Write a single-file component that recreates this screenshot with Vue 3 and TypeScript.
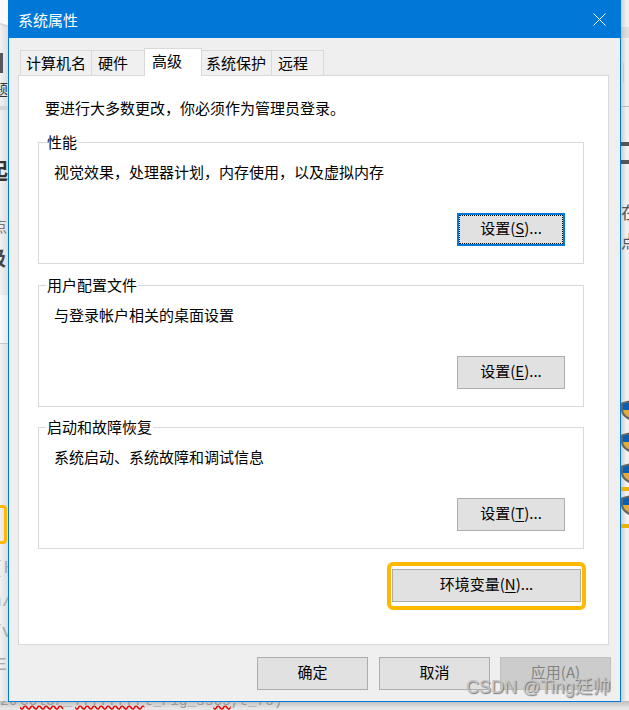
<script setup lang="ts">
const tabs = [
  { name: "计算机名", width: 72, pad: 5, active: false },
  { name: "硬件", width: 54, pad: 6, active: false },
  { name: "高级", width: 58, pad: 7, active: true },
  { name: "系统保护", width: 71, pad: 4, active: false },
  { name: "远程", width: 53, pad: 6, active: false },
];

const groups = [
  { title: "性能", text: "视觉效果，处理器计划，内存使用，以及虚拟内存", key: "S", focused: true },
  { title: "用户配置文件", text: "与登录帐户相关的桌面设置", key: "E", focused: false },
  { title: "启动和故障恢复", text: "系统启动、系统故障和调试信息", key: "T", focused: false },
];

const shields = [400, 432, 463, 495];
</script>

<template>
  <div class="desktop">
    <!-- обрывки окна позади диалога -->
    <div class="back-left">
      <div class="bl-top"></div>
      <div class="bl-block"></div>
      <div class="bl-band"></div>
      <div class="bl-white"></div>
      <span class="bl-char bl-1">题</span>
      <span class="bl-char bl-2">起</span>
      <span class="bl-char bl-3">点</span>
      <span class="bl-char bl-4">级</span>
      <div class="bl-badge"></div>
      <span class="bl-code bl-c1">(H</span>
      <span class="bl-code bl-c2">n/</span>
      <span class="bl-code bl-c3">/v</span>
      <span class="bl-code bl-c4">E</span>
    </div>
    <div class="back-right">
      <div class="br-band"></div>
      <div class="br-tick"></div>
      <div class="br-rule"></div>
      <div class="br-line br-l1"></div>
      <div class="br-line br-l2"></div>
      <span class="br-char br-1">在</span>
      <span class="br-char br-2">点</span>
      <svg
        v-for="top in shields"
        :key="top"
        class="shield"
        :style="{ top: top + 'px' }"
        width="10"
        height="21"
        viewBox="0 0 10 21"
      >
        <path d="M10 0 L2 2 L0 3 V11 Q1 17 10 21 Z" fill="#666" />
        <path d="M10 2 L2 4 V10 H10 Z" fill="#0a5fb4" />
        <path d="M10 10 H2 Q3 16 10 18 Z" fill="#e5ab3a" />
      </svg>
      <div class="br-bar br-b1"></div>
      <div class="br-bar br-b2"></div>
    </div>
    <div class="back-bottom">
      <span class="bb-lead">20</span>
      <span class="wavy">color</span>
      <span class="bb-gap">_</span>
      <span class="wavy">FFFFFFFF</span>
      <span class="plain">t_Fig_ss</span>
      <span class="wavy">cs</span>
      <span class="plain">,t_70)</span>
    </div>

    <div class="dialog">
      <header class="titlebar">
        <span>系统属性</span>
        <svg class="close" width="13" height="13" viewBox="0 0 13 13">
          <path d="M0.5 0.5 L12.5 12.5 M12.5 0.5 L0.5 12.5" stroke="#fff" stroke-width="1" fill="none" />
        </svg>
      </header>

      <div class="body">
        <nav class="tabs">
          <div
            v-for="tab in tabs"
            :key="tab.name"
            class="tab"
            :class="{ active: tab.active }"
            :style="{ width: tab.width + 'px', paddingLeft: tab.pad + 'px' }"
          >
            {{ tab.name }}
          </div>
        </nav>

        <section class="panel">
          <p class="notice">要进行大多数更改，你必须作为管理员登录。</p>

          <div v-for="group in groups" :key="group.title" class="group">
            <div class="legend">{{ group.title }}</div>
            <p class="desc">{{ group.text }}</p>
            <div class="group-actions">
              <button class="btn settings" :class="{ focused: group.focused }">
                <span class="btn-inner">设置(<u>{{ group.key }}</u>)...</span>
              </button>
            </div>
          </div>

          <div class="env-row">
            <div class="highlight">
              <button class="btn env"><span class="btn-inner">环境变量(<u>N</u>)...</span></button>
            </div>
          </div>
        </section>

        <footer class="footer">
          <button class="btn action"><span class="btn-inner">确定</span></button>
          <button class="btn action"><span class="btn-inner">取消</span></button>
          <button class="btn action disabled"><span class="btn-inner">应用(A)</span></button>
        </footer>
      </div>
    </div>

    <div class="watermark">CSDN @Ting廷帅</div>
  </div>
</template>

<style>
html,
body {
  margin: 0;
  background: #fff;
}
</style>

<style scoped>
.desktop {
  position: relative;
  width: 629px;
  height: 710px;
  overflow: hidden;
  background: #f4f4f4;
  font-family: "Noto Sans CJK SC", "Liberation Sans", sans-serif;
  color: #000;
}

/* фон слева */
.back-left {
  position: absolute;
  left: 0;
  top: 0;
  width: 9px;
  height: 710px;
  overflow: hidden;
  background: linear-gradient(to right, #f1f1f1, #dadada);
}
.bl-top {
  position: absolute;
  left: -6px;
  top: -12px;
  width: 15px;
  height: 37px;
  border-bottom: 2px solid #d5d5d5;
  border-radius: 0 0 0 14px;
  background: #fafafa;
}
.bl-block {
  position: absolute;
  left: 0;
  top: 53px;
  width: 3px;
  height: 20px;
  background: #55555f;
}
.bl-band {
  position: absolute;
  left: 0;
  top: 106px;
  width: 9px;
  height: 4px;
  background: #d6d6d6;
}
.bl-white {
  position: absolute;
  left: 0;
  top: 295px;
  width: 9px;
  height: 48px;
  border-bottom: 1px solid #c8c8c8;
  background: linear-gradient(to right, #fbfbfb, #e6e6e6);
}
.bl-char,
.bl-code,
.br-char {
  position: absolute;
  line-height: 1;
  white-space: nowrap;
}
.bl-1 {
  left: -7px;
  top: 81px;
  font-size: 15px;
  color: #333;
}
.bl-2 {
  left: -14px;
  top: 158px;
  font-size: 22px;
  font-weight: 700;
  color: #333;
}
.bl-3 {
  left: -8px;
  top: 218px;
  font-size: 15px;
  color: #777;
}
.bl-4 {
  left: -14px;
  top: 248px;
  font-size: 20px;
  font-weight: 700;
  color: #444;
}
.bl-badge {
  position: absolute;
  left: -8px;
  top: 505px;
  width: 9px;
  height: 33px;
  border: 3px solid #ffb900;
  border-radius: 4px;
}
.bl-code {
  font-family: "Liberation Mono", monospace;
  font-size: 18px;
  color: #aaa;
}
.bl-c1 {
  left: -7px;
  top: 559px;
}
.bl-c2 {
  left: -9px;
  top: 592px;
}
.bl-c3 {
  left: -9px;
  top: 623px;
}
.bl-c4 {
  left: -4px;
  top: 656px;
}

/* фон справа */
.back-right {
  position: absolute;
  left: 620px;
  top: 0;
  width: 9px;
  height: 710px;
  overflow: hidden;
  background: linear-gradient(to right, #c8c8c8, #f1f1f1 70%);
}
.br-band {
  position: absolute;
  left: 0;
  top: 27px;
  width: 9px;
  height: 11px;
  background: rgba(150, 150, 150, 0.2);
}
.br-tick {
  position: absolute;
  left: 3px;
  top: 63px;
  width: 1px;
  height: 20px;
  background: #ccc;
}
.br-rule {
  position: absolute;
  left: 0;
  top: 106px;
  width: 9px;
  height: 1px;
  background: #bbb;
}
.br-line {
  position: absolute;
  left: 1px;
  width: 9px;
  height: 4px;
  background: #555;
}
.br-l1 {
  top: 142px;
}
.br-l2 {
  top: 160px;
}
.br-1 {
  left: 1px;
  top: 203px;
  font-size: 17px;
  color: #555;
}
.br-2 {
  left: 1px;
  top: 232px;
  font-size: 17px;
  color: #555;
}
.shield {
  position: absolute;
  left: 1px;
}
.br-bar {
  position: absolute;
  left: 1px;
  width: 9px;
  height: 4px;
  background: #eab308;
}
.br-b1 {
  top: 487px;
}
.br-b2 {
  top: 524px;
}

/* фон снизу */
.back-bottom {
  position: absolute;
  left: 0;
  top: 701px;
  width: 629px;
  height: 9px;
  overflow: hidden;
  display: flex;
  align-items: flex-end;
  background: linear-gradient(to bottom, #bdbdbd, #e6e6e6 80%);
  font-family: "Liberation Mono", monospace;
  font-size: 14.4px;
  line-height: 14px;
  white-space: nowrap;
  color: #999;
}
.back-bottom span {
  flex: none;
  height: 14px;
  transform: translateY(-2px);
}
.bb-lead {
  width: 20px;
}
.bb-gap {
  width: 12px;
}
.wavy {
  text-decoration: underline wavy #e00;
  text-underline-offset: 0;
}

/* диалог */
.dialog {
  position: absolute;
  left: 8px;
  top: 0;
  width: 613px;
  height: 702px;
  box-sizing: border-box;
  display: flex;
  flex-direction: column;
  border: 1px solid #0078d7;
  border-top: 0;
  background: #efefef;
}
.titlebar {
  height: 38px;
  flex: none;
  box-sizing: border-box;
  display: flex;
  align-items: center;
  justify-content: space-between;
  padding: 0 14px 0 9px;
  background: #0078d7;
  color: #fff;
  font-size: 15px;
}
.body {
  flex: 1;
  display: flex;
  flex-direction: column;
  padding: 11px 11px 0 9px;
}
.tabs {
  display: flex;
  align-items: flex-start;
  height: 26px;
  padding-left: 2px;
  position: relative;
  z-index: 1;
}
.tab {
  box-sizing: border-box;
  height: 25px;
  margin-top: 1px;
  margin-right: -1px;
  border: 1px solid #d9d9d9;
  border-bottom: 0;
  font-size: 15px;
  line-height: 23px;
  white-space: nowrap;
  background: #f0f0f0;
}
.tab.active {
  position: relative;
  height: 28px;
  margin-top: -1px;
  background: #fff;
  line-height: 24px;
}
.panel {
  box-sizing: border-box;
  width: 591px;
  height: 570px;
  padding: 21px 0 0 19px;
  border: 1px solid #d9d9d9;
  background: #fff;
}
.notice {
  margin: 0 0 23px 7px;
  height: 22px;
  font-size: 15px;
  line-height: 22px;
}
.group {
  box-sizing: border-box;
  width: 546px;
  height: 122px;
  margin-bottom: 21px;
  padding: 0 18px 0 15px;
  border: 1px solid #d9d9d9;
}
.group:nth-child(3) {
  margin-bottom: 20px;
}
.legend {
  width: fit-content;
  height: 18px;
  margin: -10px 0 0 -8px;
  padding: 0 1px;
  background: #fff;
  font-size: 15px;
  line-height: 18px;
}
.desc {
  margin: 10px 0 0;
  height: 22px;
  font-size: 15px;
  line-height: 22px;
}
.group-actions {
  display: flex;
  justify-content: flex-end;
  margin-top: 30px;
}
.btn {
  box-sizing: border-box;
  padding: 0;
  border: 1px solid #adadad;
  background: #e1e1e1;
  font-family: inherit;
  font-size: 15px;
  color: #000;
}
.btn-inner {
  display: block;
  line-height: 25px;
  padding-bottom: 4px;
}
.btn u {
  text-underline-offset: 2px;
}
.settings {
  width: 108px;
  height: 33px;
}
.settings.focused {
  border: 2px solid #0078d7;
}
.settings.focused .btn-inner {
  line-height: 24px;
  padding-bottom: 3px;
  border: 1px dotted #111;
}
.env-row {
  display: flex;
  justify-content: flex-end;
  width: 548px;
  margin-top: -8px;
}
.highlight {
  box-sizing: border-box;
  width: 199px;
  height: 48px;
  padding: 3px 1px 4px;
  border: 4px solid #ffb900;
  border-radius: 6px;
}
.env {
  display: block;
  width: 100%;
  height: 33px;
}
.footer {
  display: flex;
  gap: 11px;
  justify-content: flex-end;
  margin-top: 12px;
  margin-right: -2px;
}
.action {
  width: 111px;
  height: 33px;
}
.disabled {
  margin-left: -1px;
  background: #ccc;
  border-color: #bfbfbf;
  color: #838383;
}

.watermark {
  position: absolute;
  left: 466px;
  top: 675px;
  font-family: "Liberation Sans", "Noto Sans CJK SC", sans-serif;
  font-size: 18px;
  line-height: 24px;
  white-space: nowrap;
  color: #c4c4c4;
  text-shadow: 1px 1px 1px rgba(70, 70, 70, 0.7);
}
</style>
